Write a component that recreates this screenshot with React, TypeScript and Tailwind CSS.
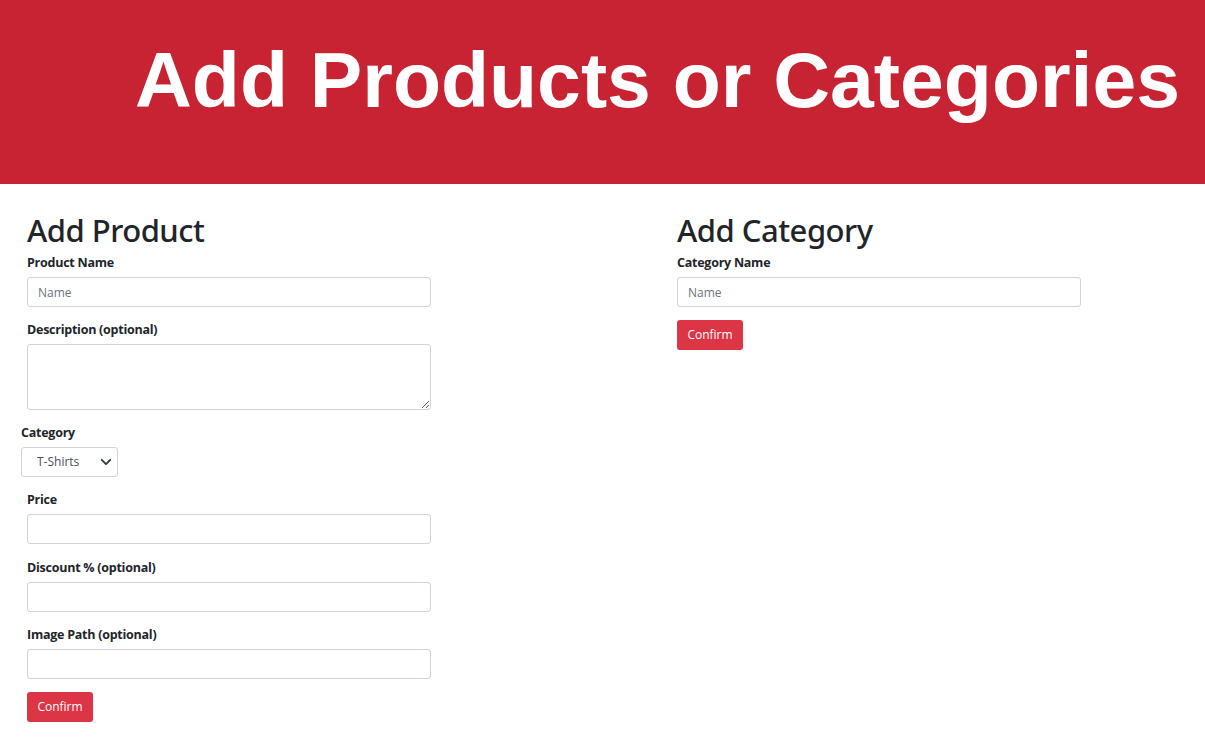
import React from "react";

const body = { fontFamily: '"Open Sans", "Noto Sans", sans-serif' };
const head = { fontFamily: '"Noto Sans", "Open Sans", sans-serif' };

function Label({ children, className = "" }: { children: React.ReactNode; className?: string }) {
  return (
    <label className={`block text-[12.5px] font-bold leading-[18px] text-[#212529] tracking-[-0.25px] ${className}`}>
      {children}
    </label>
  );
}

function Input({ placeholder = "" }: { placeholder?: string }) {
  return (
    <input
      placeholder={placeholder}
      className="block w-[404px] h-[30px] rounded-[3px] border border-[#ced4da] bg-white px-[10px] text-[12px] text-[#495057] placeholder:text-[#6c757d] outline-none"
      style={body}
    />
  );
}

function Button() {
  return (
    <button
      className="h-[30px] w-[66px] rounded-[3px] bg-[#dc3545] text-[12px] text-white"
      style={body}
    >
      Confirm
    </button>
  );
}

export default function App() {
  return (
    <div className="min-h-[745px] bg-white" style={body}>
      <header className="h-[184px] bg-[#c82333]">
        <h1
          className="pl-[135px] pt-[41px] text-[78.7px] font-bold leading-none text-white whitespace-nowrap"
          style={{ fontFamily: '"Liberation Sans", Arial, sans-serif' }}
        >
          Add Products or Categories
        </h1>
      </header>
      <div className="flex">
        <section className="w-[650px] pl-[27px] pt-[26px]">
          <h2 className="text-[31px] font-medium leading-[40px] text-[#212529] tracking-[-0.5px] mb-[4px]" style={head}>Add Product</h2>
          <Label>Product Name</Label>
          <div className="mt-[5px]"><Input placeholder="Name" /></div>
          <Label className="mt-[14px]">Description (optional)</Label>
          <textarea className="mt-[5px] block w-[404px] h-[66px] rounded-[3px] border border-[#ced4da] bg-white outline-none" />
          <div className="-ml-[6px]">
            <Label className="mt-[14px]">Category</Label>
            <div className="relative mt-[5px] w-[97px]">
              <select
                className="block w-[97px] h-[30px] appearance-none rounded-[3px] border border-[#ced4da] bg-white pl-[15px] text-[12px] text-[#495057] outline-none"
                style={body}
              >
                <option>T-Shirts</option>
              </select>
              <svg className="pointer-events-none absolute right-[6px] top-[10px]" width="12" height="10" viewBox="0 0 16 14">
                <path d="M2 4l6 6 6-6" fill="none" stroke="#343a40" strokeWidth="2.6" strokeLinecap="round" strokeLinejoin="round" />
              </svg>
            </div>
          </div>
          <Label className="mt-[14px]">Price</Label>
          <div className="mt-[5px]"><Input /></div>
          <Label className="mt-[15px]">Discount % (optional)</Label>
          <div className="mt-[5px]"><Input /></div>
          <Label className="mt-[14px]">Image Path (optional)</Label>
          <div className="mt-[5px]"><Input /></div>
          <div className="mt-[13px]"><Button /></div>
        </section>
        <section className="pl-[27px] pt-[26px]">
          <h2 className="text-[31px] font-medium leading-[40px] text-[#212529] tracking-[-0.5px] mb-[4px]" style={head}>Add Category</h2>
          <Label>Category Name</Label>
          <div className="mt-[5px]"><Input placeholder="Name" /></div>
          <div className="mt-[13px]"><Button /></div>
        </section>
      </div>
    </div>
  );
}
